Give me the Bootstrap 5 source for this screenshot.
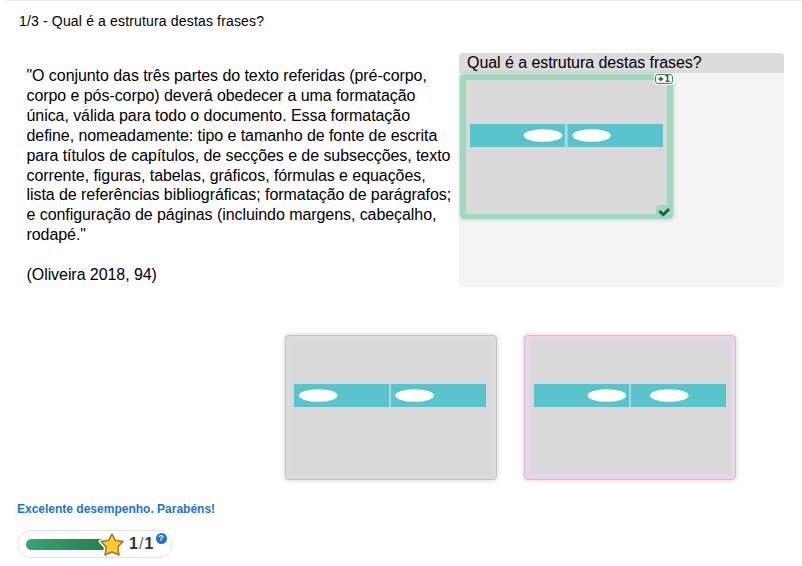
<!DOCTYPE html>
<html lang="pt">
<head>
<meta charset="utf-8">
<meta name="viewport" content="width=device-width, initial-scale=1">
<title>Qual é a estrutura destas frases?</title>
<link href="https://cdn.jsdelivr.net/npm/bootstrap@5.3.0/dist/css/bootstrap.min.css" rel="stylesheet">
<style>
body{font-family:"Liberation Sans",Arial,sans-serif;color:#000;background:#fff}
.quiz{width:802px;height:566px}
.top-line{height:1px;margin-left:5px;background:#ebebeb}
.quiz-title{font-size:14px;line-height:20px;padding:10px 0 0 19px;height:52px;letter-spacing:.16px}
.question-row{height:282px}
.passage{width:459px;padding:13px 0 0 26.500px;font-size:16px;line-height:19.9px;letter-spacing:-.066px;white-space:nowrap}
.dropzone{width:325px;height:234px;background:#f4f4f4;border-radius:4px}
.zone-head{height:20px;background:#dcdcdc;padding-left:8px;font-size:16px;line-height:19px;letter-spacing:-.06px;border-radius:4px 4px 0 0}
.tile{width:212px;height:145px;border-radius:4px;border:1px solid #c3c3c3;padding:4px;background:#dcdcdc;box-shadow:0 0 5px rgba(0,0,0,.2)}
.tile svg{display:block;width:202px;height:135px}
.tile-right{width:213px;height:145px;border-color:#9fd9bb;background:#9fd9bb;padding:5px;margin:1px 0 0 1px}
.tile-right svg.art{width:201px;height:134px}
.tile-pink{border-color:#d6b9d8;background:#ead6e8}
.point{right:-1px;top:-1px;width:18px;height:10px;border:1px solid #3f7f60;border-radius:3px;background:#fff;box-shadow:0 0 0 1px #fff}
.tile .point svg{width:16px;height:8px}
.point text{font:bold 8px "DejaVu Sans",sans-serif;fill:#255c41}
.tick{right:0;bottom:0;width:16px;height:13px;background:#9fd9bb;border-radius:3px 0 0 0}
.tile .tick svg{width:16px;height:13px}
.choices{gap:27px;padding-left:285px}
.feedback{margin:21px 0 0 17px;font-size:12px;line-height:16px;font-weight:700;color:#1a73d9}
.score{width:156px;height:28px;margin:13px 0 0 17px;border:1px solid #e3e3e3;border-radius:14px;padding-left:8px}
.score-bar{width:78px;height:11px;border-radius:6px 0 0 6px;background:linear-gradient(90deg,#36a66e,#24804f)}
.score-star{width:28px;height:28px;margin-left:-6px}
.score-value{font-size:16px;line-height:20px;font-weight:700;color:#333;margin-left:3px;letter-spacing:1.1px}
.score-value i{font-style:normal;font-weight:400;color:#666}
.help{width:11px;height:11px;margin:-11px 0 0 1px;border-radius:50%;background:#1a73d9;color:#fff;font-size:9px;line-height:11px;font-weight:700}
</style>
</head>
<body>
<main class="quiz overflow-hidden">
  <div class="top-line"></div>
  <h1 class="quiz-title fw-normal m-0">1/3 - Qual é a estrutura destas frases?</h1>
  <section class="question-row d-flex align-items-start">
    <div class="passage flex-shrink-0">
      <p class="m-0">"O conjunto das três partes do texto referidas (pré-corpo,<br>corpo e pós-corpo) deverá obedecer a uma formatação<br>única, válida para todo o documento. Essa formatação<br>define, nomeadamente: tipo e tamanho de fonte de escrita<br>para títulos de capítulos, de secções e de subsecções, texto<br>corrente, figuras, tabelas, gráficos, fórmulas e equações,<br>lista de referências bibliográficas; formatação de parágrafos;<br>e configuração de páginas (incluindo margens, cabeçalho,<br>rodapé."<br><br>(Oliveira 2018, 94)</p>
    </div>
    <div class="dropzone">
      <div class="zone-head">Qual é a estrutura destas frases?</div>
      <div class="tile tile-right position-relative">
        <svg class="art" viewBox="0 0 201 134"><path fill="#d9d9d9" d="M0 0h201v134H0z"/><path fill="#b5dadd" d="M99 44h3v23h-3z"/><path fill="#59c4cb" d="M4 44h95v23H4zM101.500 44h95.500v23h-95.500z"/><g fill="#fff"><ellipse cx="77" cy="55.500" rx="19.200" ry="6.300"/><ellipse cx="125.600" cy="55.500" rx="19.200" ry="6.300"/></g></svg>
        <span class="point position-absolute"><svg viewBox="0 0 16 8"><path fill="none" stroke="#255c41" stroke-width="1.600" d="M2.300 4h5M4.800 1.700v4.600"/><text x="8.500" y="6.800" textLength="6">1</text></svg></span>
        <span class="tick position-absolute"><svg viewBox="0 0 16 13"><path fill="none" stroke="#1d6144" stroke-width="2.900" d="M3.500 6l3.700 3.700L13 4"/></svg></span>
      </div>
    </div>
  </section>
  <section class="choices d-flex">
    <div class="tile"><svg viewBox="0 0 202 135"><path fill="#d9d9d9" d="M0 0h202v135H0z"/><path fill="#a9d8dc" d="M99 44h3v23h-3z"/><path fill="#59c4cb" d="M4 44h95v23H4zM101 44h95v23h-95z"/><g fill="#fff"><ellipse cx="28.300" cy="55.500" rx="19.300" ry="6.300"/><ellipse cx="124.600" cy="55.500" rx="19.300" ry="6.300"/></g></svg></div>
    <div class="tile tile-pink"><svg viewBox="0 0 202 135"><path fill="#d9d9d9" d="M1 0h201v134H1z"/><path fill="#a9d8dc" d="M100 44h3v23h-3z"/><path fill="#59c4cb" d="M5 44h95v23H5zM102 44h95v23h-95z"/><g fill="#fff"><ellipse cx="77.900" cy="55.500" rx="19.300" ry="6.300"/><ellipse cx="140.300" cy="55.500" rx="19.300" ry="6.300"/></g></svg></div>
  </section>
  <p class="feedback mb-0">Excelente desempenho. Parabéns!</p>
  <div class="score d-flex align-items-center">
    <div class="score-bar"></div>
    <svg class="score-star" viewBox="-14 -14 28 28"><path d="M0-10l3.400 6.400 7.600 1.100-5.200 5.500 1.200 8L0 7.800-7 11l1.200-8L-11-2.500l7.600-1.100z" fill="#fff" stroke="#fff" stroke-width="4.500" stroke-linejoin="round"/><path d="M0-10l3.400 6.400 7.600 1.100-5.200 5.500 1.200 8L0 7.800-7 11l1.200-8L-11-2.500l7.600-1.100z" fill="#ffcb2b" stroke="#94701f" stroke-width="1.400" stroke-linejoin="round"/></svg>
    <span class="score-value">1<i>/</i>1</span>
    <span class="help text-center">?</span>
  </div>
</main>
<script src="https://cdn.jsdelivr.net/npm/bootstrap@5.3.0/dist/js/bootstrap.bundle.min.js"></script>
</body>
</html>
